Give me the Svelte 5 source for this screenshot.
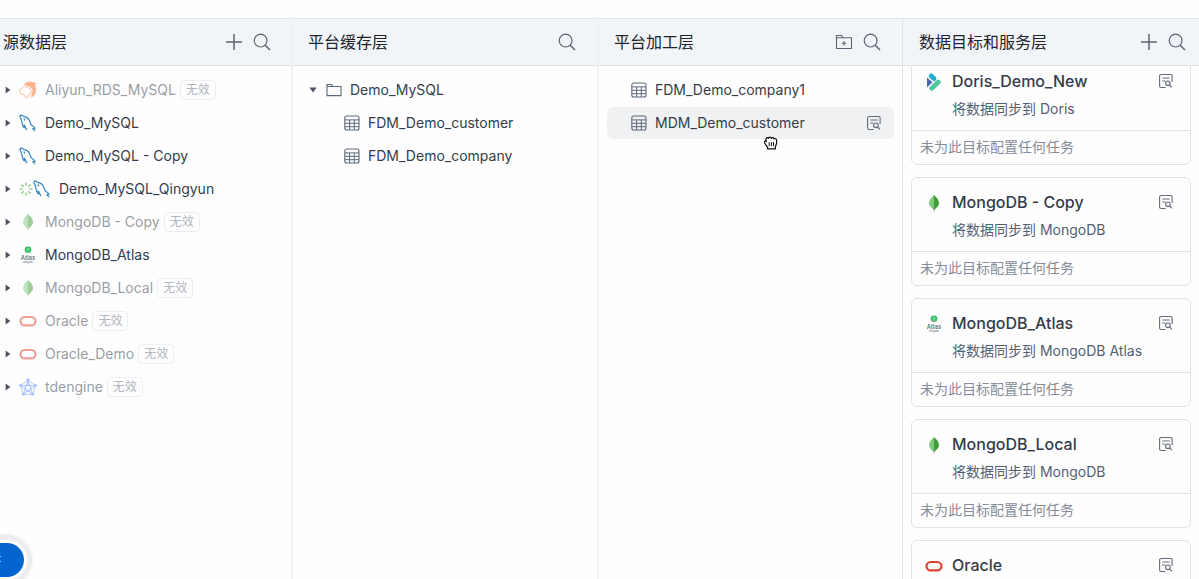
<script>
  const sources = [
    { name: 'Aliyun_RDS_MySQL', icon: 'aliyun', invalid: true },
    { name: 'Demo_MySQL', icon: 'mysql' },
    { name: 'Demo_MySQL - Copy', icon: 'mysql' },
    { name: 'Demo_MySQL_Qingyun', icon: 'mysql', loading: true },
    { name: 'MongoDB - Copy', icon: 'mongo', invalid: true },
    { name: 'MongoDB_Atlas', icon: 'atlas' },
    { name: 'MongoDB_Local', icon: 'mongo', invalid: true },
    { name: 'Oracle', icon: 'oracle', invalid: true },
    { name: 'Oracle_Demo', icon: 'oracle', invalid: true },
    { name: 'tdengine', icon: 'tdengine', invalid: true }
  ];
  const cached = ['FDM_Demo_customer', 'FDM_Demo_company'];
  const models = [
    { name: 'FDM_Demo_company1' },
    { name: 'MDM_Demo_customer', active: true }
  ];
  const targets = [
    { name: 'Doris_Demo_New', kind: 'Doris', icon: 'doris' },
    { name: 'MongoDB - Copy', kind: 'MongoDB', icon: 'mongo' },
    { name: 'MongoDB_Atlas', kind: 'MongoDB Atlas', icon: 'atlas' },
    { name: 'MongoDB_Local', kind: 'MongoDB', icon: 'mongo' },
    { name: 'Oracle', icon: 'oracle' }
  ];
</script>

{#snippet searchButton()}
  <button class="tool" aria-label="搜索">
    <svg width="18" height="18" viewBox="0 0 18 18" fill="none" stroke="currentColor" stroke-width="1.2">
      <circle cx="7.6" cy="7.6" r="6.4" /><path d="M12.2 12.2 17 17" stroke-width="1.5" />
    </svg>
  </button>
{/snippet}

{#snippet addButton()}
  <button class="tool" aria-label="新建">
    <svg width="18" height="18" viewBox="0 0 18 18" fill="none" stroke="currentColor" stroke-width="1.5">
      <path d="M9 1v16M1 9h16" />
    </svg>
  </button>
{/snippet}

{#snippet caret(open)}
  <button class="caret" class:open aria-label="展开">
    <svg width="8" height="8" viewBox="0 0 8 8"><path d="M1.6.4 6.400 4 1.600 7.600z" fill="currentColor" /></svg>
  </button>
{/snippet}

{#snippet tableIcon()}
  <svg class="glyph" width="16" height="16" viewBox="0 0 16 16" fill="none" stroke="currentColor">
    <rect x=".8" y="1" width="14.2" height="14" rx="2" stroke-width="1.1" />
    <path d="M1 4.9h14M1 8.3h14M1 11.7h14M5.6 5v10M10.3 5v10" stroke-width="1" />
  </svg>
{/snippet}

{#snippet detailButton()}
  <button class="detail" aria-label="详情">
    <svg width="16" height="16" viewBox="0 0 16 16" fill="none" stroke="currentColor" stroke-width="1.1">
      <path d="M7.6 14.5H3.2a1.6 1.6 0 0 1-1.6-1.6V3.100a1.600 1.600 0 0 1 1.600-1.600h9.600a1.300 1.300 0 0 1 1.300 1.300v6.200" />
      <path d="M4.300 5h7.400M4.300 8h3" />
      <circle cx="9.900" cy="10.300" r="2.300" /><path d="m11.600 12 2.300 2.400" />
    </svg>
  </button>
{/snippet}

{#snippet brand(kind)}
  <svg class="brand" width="18" height="18" viewBox="0 0 18 18" aria-hidden="true">
    {#if kind === 'aliyun'}
      <path d="M5 3.600C6.800.800 10.300-.200 13.500 1.300l3.900.500-1.500 2.200c1.900 3.700 1.500 8-1.500 11l-2.200 2.300.3-4.300c1.500-2.500 1.300-4.900-.700-6.600C9.900 4.900 7.600 5.600 5 3.600z" fill="#ff6820" />
      <path d="M4.700 13.200c-2.300.4-4-.9-3.900-3 .1-1.800 1.200-3 2.700-3 .4-1.700 2.700-2.100 3.700-.8 1.500-.9 3.700 0 3.600 1.900 1.700.4 2 2.500.7 3.500-.3 1-1 1.500-1.900 1.500l-.6 2.700c-.5 1.100-2.200 1.200-2.800.1z" fill="#fff" stroke="#ff7a3c" stroke-width="1" />
    {:else if kind === 'mysql'}
      <g fill="none" stroke="#3486c2" stroke-width="1.200" stroke-linecap="round" stroke-linejoin="round">
        <path d="M3.900 11.300C2.700 9.500 3.200 7.800 2.500 6.200 2 4.800 1.200 3.600 1 2.200c-.2-1.200 1.600-1.400 2.800-.5 1 .7 1.500.9 2.500 1.100 2.800.7 4.500 3.500 5.300 6.900.2 1 .9 1.500 1.800 2.100.9.500 1.900 1.400 2.600 2.600-1-.2-1.900 0-2.300.5.600.6 1.500 1 2.100 1.800" />
        <path d="M3.900 11.300c.2.900.6 1.800 1.200 2.500l.4-2.600c.8 1.300 1.200 3.100 2.100 4.400" /><path d="m5 4.900.6 1" />
      </g>
    {:else if kind === 'mongo'}
      <path d="M9 1C6.200 3.600 4 6 4 9.100c0 2.700 2 4.800 4.400 6.300L9 16.500z" fill="#80cc7e" />
      <path d="M9 1c2.800 2.600 5 5 5 8.100 0 2.700-2.100 4.800-4.400 6.300L9.300 16.600 8.800 15.600z" fill="#3fa037" />
      <path d="M9 14v3.500" stroke="#a49b79" stroke-width=".7" />
    {:else if kind === 'atlas'}
      <circle cx="9" cy="3.700" r="3.300" fill="#22b45c" />
      <path d="M6.700 2.600h4.600M6.200 5h5.600M9 .8v5.800M7.500 3.700h3" stroke="#a6f0bc" stroke-width=".5" />
      <text x="9" y="13.800" text-anchor="middle" font-size="6" font-weight="500" fill="#4d5d65">Atlas</text>
      <text x="9" y="17" text-anchor="middle" font-size="2" fill="#4d5d65">mongoDB</text>
    {:else if kind === 'oracle'}
      <rect x="1.500" y="5" width="15" height="8.400" rx="4.200" fill="none" stroke="#e2402f" stroke-width="2.200" />
    {:else if kind === 'tdengine'}
      <g fill="none" stroke="#4a7cf0" stroke-width=".8">
        <path d="M9 2 1.600 7.500l2.800 8.700h9.200l2.800-8.700zM9 2 4.400 16.200 16.400 7.500H1.600l12 8.700zM9 2v4M6 9.500l3-3.400 3 3.400-1.200 3.800H7.200z" />
      </g>
      <g fill="#4a7cf0"><circle cx="9" cy="1.800" r="1.400" /><circle cx="1.500" cy="7.500" r="1.400" /><circle cx="16.500" cy="7.500" r="1.400" /><circle cx="4.400" cy="16.200" r="1.400" /><circle cx="13.600" cy="16.200" r="1.400" /></g>
    {:else if kind === 'doris'}
      <path d="M2 4.500 7.400 9.300 2 14.500z" fill="#4d62b5" />
      <path d="M6.200 2.900 9 5.600" stroke="#24abd2" stroke-width="4.800" stroke-linecap="round" />
      <path d="m6.800 15.300 6.500-6.200" stroke="#50ca9d" stroke-width="4.800" stroke-linecap="round" />
    {/if}
  </svg>
{/snippet}

<main class="board">
  <section class="column first">
    <header><h2>源数据层</h2><div class="tools">{@render addButton()}{@render searchButton()}</div></header>
    <ul class="list">
      {#each sources as s}
        <li class="row" class:invalid={s.invalid}>
          {@render caret(false)}
          {#if s.loading}
            <svg class="loading" width="14" height="14" viewBox="0 0 14 14" stroke="#62ba58" stroke-width="1.100" stroke-linecap="round">
              <path d="M7 1v2M7 11v2M1 7h2.300M10.700 7H13M2.800 2.800l1.500 1.500M9.700 9.700l1.500 1.500M2.800 11.200l1.500-1.500M9.700 4.300l1.500-1.500" />
            </svg>
          {/if}
          {@render brand(s.icon)}
          <span class="name">{s.name}</span>
          {#if s.invalid}<span class="badge">无效</span>{/if}
        </li>
      {/each}
    </ul>
  </section>

  <section class="column">
    <header><h2>平台缓存层</h2><div class="tools">{@render searchButton()}</div></header>
    <ul class="list">
      <li class="row folder">
        {@render caret(true)}
        <svg class="glyph" width="16" height="16" viewBox="0 0 16 16" fill="none" stroke="currentColor" stroke-width="1.100">
          <path d="M1 13.600V2.500h4.600l1.300 2H15v9.100zM1 4.500h6" />
        </svg>
        <span class="name">Demo_MySQL</span>
      </li>
      {#each cached as name}
        <li class="row child">{@render tableIcon()}<span class="name">{name}</span></li>
      {/each}
    </ul>
  </section>

  <section class="column">
    <header>
      <h2>平台加工层</h2>
      <div class="tools">
        <button class="tool" aria-label="新建目录">
          <svg width="18" height="18" viewBox="0 0 18 18" fill="none" stroke="currentColor" stroke-width="1.100">
            <path d="M1.500 15.500v-13h5.200l1.400 2.300h8.400v10.700zM1.500 4.800h7M9 8v4.600M6.700 10.300h4.600" />
          </svg>
        </button>
        {@render searchButton()}
      </div>
    </header>
    <ul class="list">
      {#each models as m}
        <li class="row model" class:active={m.active}>
          {@render tableIcon()}<span class="name">{m.name}</span>
          {#if m.active}
            {@render detailButton()}
            <svg class="hand" width="16" height="16" viewBox="0 0 16 16" fill="#fff" stroke="#111" stroke-width="1.200" stroke-linejoin="round">
              <path d="M4.600 13.800v-1.500L2.700 9.700C1.300 8 1 6.700 2 6.200c.5-.2 1 0 1.400.4L3 4.200c0-1.800 1.900-2 2.400-.8.300-1.700 2.600-1.700 3 0 .7-1.200 2.500-.8 2.600.5 1-.8 2.600-.2 2.600 1.300v2.600c0 1.500-.9 2.500-1.200 4v2z" />
              <path d="M6.200 7.200v4M8.400 7.200v4M10.500 7.200v4" stroke-width="1" />
            </svg>
          {/if}
        </li>
      {/each}
    </ul>
  </section>

  <section class="column last">
    <header><h2>数据目标和服务层</h2><div class="tools">{@render addButton()}{@render searchButton()}</div></header>
    <div class="viewport">
      <div class="cards">
        {#each targets as t}
          <article class="card">
            <div class="summary">
              {@render brand(t.icon)}
              <div class="info"><h3>{t.name}</h3>{#if t.kind}<p>将数据同步到 {t.kind}</p>{/if}</div>
              {@render detailButton()}
            </div>
            {#if t.kind}<p class="empty">未为此目标配置任何任务</p>{/if}
          </article>
        {/each}
      </div>
    </div>
  </section>

  <button class="float" aria-label="帮助">
    <svg width="4" height="8" viewBox="0 0 4 8" fill="#a9c9ef"><path d="M3 0h1v1H3zM3 5h1v1H3z" /></svg>
  </button>
</main>

<style>
  :global(body) {
    background: #fefefe;
    font-family: Inter, "Noto Sans CJK SC", sans-serif;
    font-size: 14px;
    color: #343c4c;
  }
  h2, h3, p, ul { margin: 0; padding: 0; }
  ul { list-style: none; }
  svg { display: block; flex: none; }
  button {
    display: flex;
    align-items: center;
    justify-content: center;
    padding: 0;
    border: 0;
    background: none;
    color: inherit;
    cursor: pointer;
  }
  .board {
    position: relative;
    box-sizing: border-box;
    height: 100vh;
    padding-top: 18px;
    overflow: hidden;
    display: grid;
    grid-template-columns: 291fr 306fr 305fr 297fr;
  }
  .column {
    display: flex;
    flex-direction: column;
    min-width: 0;
    min-height: 0;
    border-left: 2px solid #f0f1f3;
  }
  .column.first { border-left: 0; }
  .column.last { border-left: 1px solid #dfe2e9; }
  header {
    display: flex;
    flex: none;
    align-items: center;
    justify-content: space-between;
    box-sizing: border-box;
    height: 48px;
    padding: 0 21px 0 15px;
    border-top: 1px solid #dfe3e8;
    border-bottom: 1px solid #dfe3e8;
    background: #f2f5f8;
  }
  .first header { padding-left: 3px; padding-right: 20px; }
  .last header { padding-left: 16px; padding-right: 13px; }
  h2 { font-size: 16px; line-height: 24px; font-weight: 400; color: #20242b; }
  .tools { display: flex; gap: 10px; color: #5c6373; }
  .list { display: flex; flex-direction: column; gap: 1px; padding: 8px 8px 0; }
  .row {
    display: flex;
    align-items: center;
    height: 32px;
    padding-right: 12px;
    border-radius: 6px;
    line-height: 20px;
  }
  .first .list { padding-left: 3px; }
  .caret { width: 10px; height: 16px; margin-right: 6px; color: #4c5361; }
  .caret.open svg { transform: rotate(90deg); }
  .first .name { margin-left: 8px; }
  .invalid .name { opacity: 0.5; }
  .invalid .brand { opacity: 0.5; }
  .badge {
    box-sizing: border-box;
    height: 20px;
    margin-left: 4px;
    padding: 0 5px;
    border: 1px solid #eceef1;
    border-radius: 4px;
    font-size: 12px;
    line-height: 18px;
    color: #b2b7c1;
  }
  .glyph { margin-right: 8px; color: #5d6879; }
  .folder { padding-left: 7px; }
  .folder .caret { margin-right: 8px; }
  .child { padding-left: 43px; }
  .model { padding-left: 24px; position: relative; }
  .active { background: #f0f1f3; }
  .detail { margin-left: auto; color: #646b79; }
  .hand { position: absolute; left: 156px; top: 28px; }
  .viewport { flex: 1; min-height: 0; overflow: hidden; }
  .cards { display: flex; flex-direction: column; gap: 12px; margin-top: -10px; padding: 0 8px; }
  .card { flex: none; border: 1px solid #dfe2e9; border-radius: 6px; }
  .summary {
    display: flex;
    align-items: flex-start;
    gap: 9px;
    padding: 12px 16px 10px 13px;
    border-bottom: 1px solid #dfe2e9;
  }
  .summary .brand { margin-top: 4px; }
  .summary .detail { margin-top: 4px; }
  h3 { font-size: 16px; line-height: 24px; font-weight: 500; }
  .info p { margin-top: 5px; line-height: 22px; color: #535f73; }
  .empty { padding: 5px 8px 7px; line-height: 21px; color: #858d9a; }
  .float {
    position: absolute;
    left: -40px;
    bottom: 2px;
    width: 64px;
    height: 34px;
    justify-content: flex-start;
    padding-left: 37px;
    border-radius: 17px;
    background: #0564cf;
    box-shadow: 0 0 0 3px #fff, 0 0 0 8px #ebecee, 0 0 3px 9px #f3f4f5;
  }
</style>
